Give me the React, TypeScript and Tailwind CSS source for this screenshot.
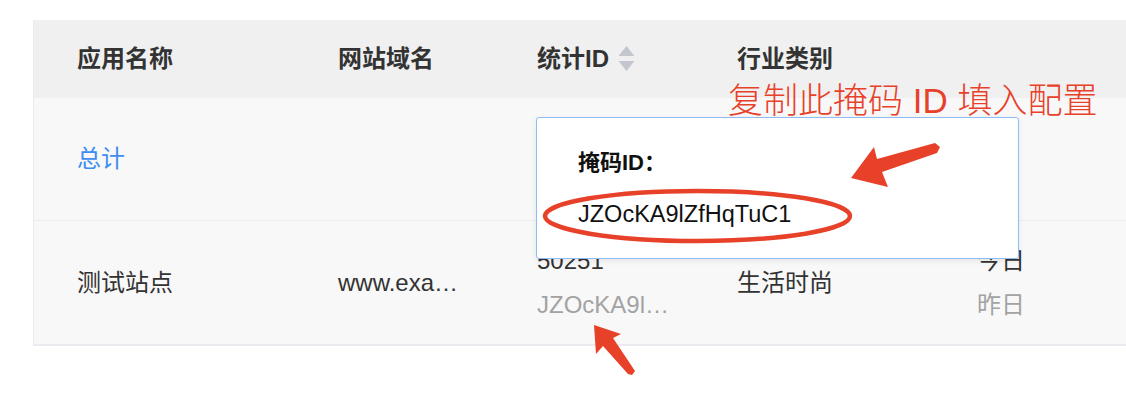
import React from 'react';

const font = { fontFamily: '"Liberation Sans", "Noto Sans CJK SC", sans-serif' };

const cols = 'grid grid-cols-[261px_199px_200px_240px_1fr]';

const SortIcon = () => (
  <svg width="17" height="26" viewBox="0 0 17 26" className="ml-[9px]">
    <path d="M8.5 0 L16.5 10 L0.5 10 Z" fill="#c3c6cc" />
    <path d="M0.5 15 L16.5 15 L8.5 25 Z" fill="#c3c6cc" />
  </svg>
);

// 掩码提示浮层
const MaskPopover = () => (
  <div className="absolute left-[536px] top-[117px] w-[483px] h-[142px] bg-white border-[1.5px] border-[#8dbdf2] rounded-[3px] shadow-[0_2px_6px_rgba(0,0,0,0.08)] pl-[41px] pt-[30px]">
    <div className="text-[22px] leading-[30px] font-bold text-[#111]">掩码ID：</div>
    <div className="mt-[21px] text-[23.5px] leading-[30px] text-[#111]">JZOcKA9lZfHqTuC1</div>
  </div>
);

// 红色标注：椭圆 + 两个箭头
const Annotations = () => (
  <svg className="absolute left-0 top-0 pointer-events-none" width="1126" height="412" viewBox="0 0 1126 412">
    <ellipse cx="697.5" cy="216" rx="152.5" ry="25" fill="none" stroke="#e8412a" strokeWidth="4.5" />
    <polygon
      points="851,178 874,147 877,159 935,143 940,147 937,153 882,172 888,187"
      fill="#e8412a"
      strokeLinejoin="round"
    />
    <polygon
      points="594,325 621,334 613,338 635,371 632,375 628,374 603,346 596,354"
      fill="#e8412a"
      strokeLinejoin="round"
    />
  </svg>
);

export default function App() {
  return (
    <div className="relative w-[1126px] h-[412px] bg-white overflow-hidden" style={font}>
      <div className="pt-[20px] pl-[33px]">
        <div className="w-[1093px] border-l border-[#ececec] border-b-2 border-b-[#ebebef]">
          {/* 表头 */}
          <div className={`${cols} h-[78px] bg-[#f0f0f0] text-[24px] font-semibold text-[#333]`}>
            <div className="pl-[43px] flex items-center">应用名称</div>
            <div className="pl-[43px] flex items-center">网站域名</div>
            <div className="pl-[43px] flex items-center">
              统计ID
              <SortIcon />
            </div>
            <div className="pl-[43px] flex items-center">行业类别</div>
            <div />
          </div>

          {/* 总计 */}
          <div className={`${cols} h-[123px] bg-[#f8f8f8] border-b border-[#ececec] text-[24px]`}>
            <div className="pl-[43px] flex items-center text-[#3d8ef0]">总计</div>
            <div />
            <div />
            <div />
            <div />
          </div>

          {/* 数据行 */}
          <div className={`${cols} h-[123px] bg-[#f8f8f8] text-[24px] text-[#333]`}>
            <div className="pl-[43px] flex items-center">测试站点</div>
            <div className="pl-[43px] flex items-center">www.exa…</div>
            <div className="pl-[43px] flex flex-col justify-center leading-[44px]">
              <span>50251</span>
              <span className="text-[#a3a3a3]">JZOcKA9l…</span>
            </div>
            <div className="pl-[43px] flex items-center">生活时尚</div>
            <div className="pl-[43px] flex flex-col justify-center leading-[44px]">
              <span>今日</span>
              <span className="text-[#a3a3a3]">昨日</span>
            </div>
          </div>
        </div>
      </div>

      <MaskPopover />

      <div className="absolute left-[728px] top-[83px] text-[35px] leading-none font-light text-[#e8412a] whitespace-nowrap">
        复制此掩码 ID 填入配置
      </div>

      <Annotations />
    </div>
  );
}
